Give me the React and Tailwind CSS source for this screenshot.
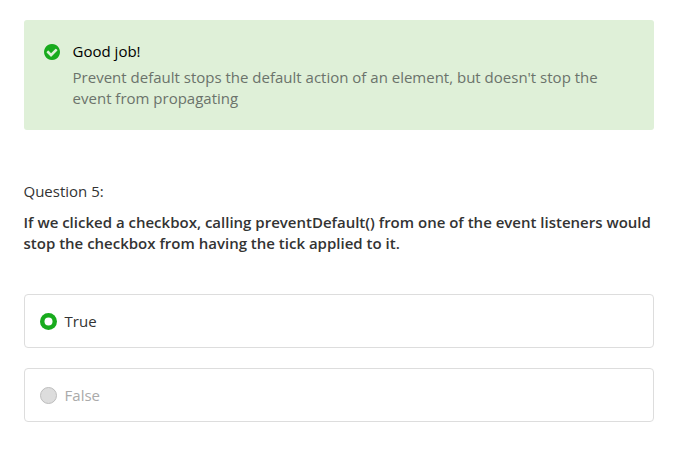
function CheckCircle() {
  return (
    <svg className="mt-[3px] ml-[0.3px] size-4 shrink-0 text-[#18ab1d]" viewBox="128 128 1536 1536" fill="currentColor">
      <path d="M1412 734q0-28-18-46l-91-90q-19-19-45-19t-45 19l-408 407-226-226q-19-19-45-19t-45 19l-91 90q-18 18-18 46 0 27 18 45l362 362q19 19 45 19 27 0 46-19l543-543q18-18 18-45zm252 162q0 209-103 385.5t-279.5 279.5-385.5 103-385.5-103-279.5-279.5-103-385.5 103-385.5 279.5-279.5 385.5-103 385.5 103 279.5 279.5 103 385.5z" />
    </svg>
  );
}

function Option({ label, checked }) {
  return (
    <div className="flex h-[54px] items-center rounded-[4px] border border-[#dddddd] pl-[15px]">
      <svg className="size-[17px]" viewBox="0 0 17 17">
        {checked ? (
          <>
            <circle cx="8.5" cy="8.5" r="8.5" fill="#18ab1d" />
            <circle cx="8.5" cy="8.5" r="4" fill="white" />
          </>
        ) : (
          <circle cx="8.5" cy="8.5" r="8" fill="#dddddd" stroke="#bdbdbd" />
        )}
      </svg>
      <span className={checked ? "ml-[7.6px] text-[#333333]" : "ml-[7.6px] text-[#aaaaaa]"}>{label}</span>
    </div>
  );
}

export default function App() {
  return (
    <main className="h-[464px] w-[679px] bg-white pt-5 pr-[25px] pl-6 font-['Open_Sans',sans-serif] text-[15px] leading-[21px] text-[#333333]">
      <section className="flex h-[110px] rounded-[3px] bg-[#dff0d8] pt-[21px] pl-5">
        <CheckCircle />
        <div className="ml-[12.3px]">
          <h2 className="text-black">Good job!</h2>
          <p className="mt-[5px] w-[550px] text-[#6b736b]">
            Prevent default stops the default action of an element, but doesn't stop the event from propagating
          </p>
        </div>
      </section>
      <h3 className="mt-[51px] -ml-[0.5px]">Question 5:</h3>
      <p className="mt-[10px] -ml-[0.5px] font-semibold">
        If we clicked a checkbox, calling preventDefault() from one of the event listeners would stop the checkbox from having the tick applied to it.
      </p>
      <div className="mt-[40px] flex flex-col gap-5">
        <Option label="True" checked />
        <Option label="False" />
      </div>
    </main>
  );
}
